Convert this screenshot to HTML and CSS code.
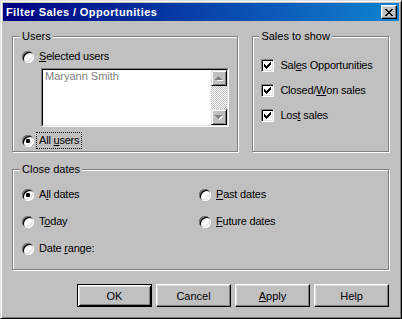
FILE: index.html
```html
<!DOCTYPE html>
<html lang="en">
<head>
  <meta charset="UTF-8">
  <title>Filter Sales / Opportunities</title>
  <link rel="stylesheet" href="styles.css">
</head>
<body>
  <div class="window">
    <!-- Title bar -->
    <div class="titlebar">
      <span class="title">Filter Sales / Opportunities</span>
      <span class="close-btn">
        <svg width="8" height="7" viewBox="0 0 8 7" shape-rendering="crispEdges"><path d="M0 0h2v1H0z M6 0h2v1H6z M1 1h2v1H1z M5 1h2v1H5z M2 2h4v1H2z M3 3h2v1H3z M2 4h4v1H2z M1 5h2v1H1z M5 5h2v1H5z M0 6h2v1H0z M6 6h2v1H6z" fill="#000"/></svg>
      </span>
    </div>

    <div class="dialog-body">
      <div class="top-row">
        <!-- Users -->
        <div class="group users">
          <div class="legend">Users</div>
          <div class="opt first"><span class="radio"></span><span><u>S</u>elected users</span></div>
          <div class="listbox">
            <div class="listbox-inner">
              <div class="list-items"><div class="list-item">Maryann Smith</div></div>
              <div class="scrollbar">
                <span class="scroll-btn">
                  <svg width="8" height="5" viewBox="0 0 8 5" shape-rendering="crispEdges"><path d="M4 1h1v1h1v1h1v1h1v1H2V4h1V3h1z" fill="#fff"/><path d="M3 0h1v1h1v1h1v1h1v1H0V3h1V2h1V1h1z" fill="#808080"/></svg>
                </span>
                <span class="scroll-track"></span>
                <span class="scroll-btn">
                  <svg width="8" height="5" viewBox="0 0 8 5" shape-rendering="crispEdges"><path d="M1 1h7v1H7v1H6v1H5v1H4V4H3V3H2V2H1z" fill="#fff"/><path d="M0 0h7v1H6v1H5v1H4v1H3V3H2V2H1V1H0z" fill="#808080"/></svg>
                </span>
              </div>
            </div>
          </div>
          <div class="opt last"><span class="radio checked"></span><span class="focus">All <u>u</u>sers</span></div>
        </div>

        <!-- Sales to show -->
        <div class="group sales">
          <div class="legend">Sales to show</div>
          <div class="checks">
            <div class="opt"><span class="checkbox"><svg width="7" height="7" viewBox="0 0 7 7" shape-rendering="crispEdges"><path d="M6 0h1v1H6z M5 1h2v1H5z M0 2h1v1H0z M4 2h3v1H4z M0 3h2v1H0z M3 3h3v1H3z M0 4h5v1H0z M1 5h3v1H1z M2 6h1v1H2z" fill="#000"/></svg></span><span>Sal<u>e</u>s Opportunities</span></div>
            <div class="opt"><span class="checkbox"><svg width="7" height="7" viewBox="0 0 7 7" shape-rendering="crispEdges"><path d="M6 0h1v1H6z M5 1h2v1H5z M0 2h1v1H0z M4 2h3v1H4z M0 3h2v1H0z M3 3h3v1H3z M0 4h5v1H0z M1 5h3v1H1z M2 6h1v1H2z" fill="#000"/></svg></span><span>Closed/<u>W</u>on sales</span></div>
            <div class="opt"><span class="checkbox"><svg width="7" height="7" viewBox="0 0 7 7" shape-rendering="crispEdges"><path d="M6 0h1v1H6z M5 1h2v1H5z M0 2h1v1H0z M4 2h3v1H4z M0 3h2v1H0z M3 3h3v1H3z M0 4h5v1H0z M1 5h3v1H1z M2 6h1v1H2z" fill="#000"/></svg></span><span>Los<u>t</u> sales</span></div>
          </div>
        </div>
      </div>

      <!-- Close dates -->
      <div class="group dates">
        <div class="legend">Close dates</div>
        <div class="date-grid">
          <div class="opt"><span class="radio checked"></span><span>A<u>l</u>l dates</span></div>
          <div class="opt"><span class="radio"></span><span><u>P</u>ast dates</span></div>
          <div class="opt"><span class="radio"></span><span>T<u>o</u>day</span></div>
          <div class="opt"><span class="radio"></span><span><u>F</u>uture dates</span></div>
          <div class="opt"><span class="radio"></span><span>Date <u>r</u>ange:</span></div>
        </div>
      </div>

      <!-- Buttons -->
      <div class="buttons">
        <button class="btn default">OK</button>
        <button class="btn">Cancel</button>
        <button class="btn"><u>A</u>pply</button>
        <button class="btn">Help</button>
      </div>
    </div>
  </div>
</body>
</html>
```

FILE: styles.css
```css
body {
  margin: 0;
  font-family: "Liberation Sans", Arial, sans-serif;
  font-size: 11px;
  line-height: 13px;
  color: #000;
  background: #c0c0c0;
}

.window {
  box-sizing: border-box;
  width: 402px;
  height: 319px;
  padding: 2px;
  background: #c0c0c0;
  border: 1px solid;
  border-color: #dfdfdf #000 #000 #dfdfdf;
  box-shadow: inset 1px 1px 0 #fff, inset -1px -1px 0 #808080;
}

/* Title bar */
.titlebar {
  height: 18px;
  display: flex;
  align-items: center;
  justify-content: space-between;
  padding: 0 2px 0 3px;
  background: linear-gradient(to right, #000080, #1084d0);
}

.title {
  color: #fff;
  font-weight: bold;
  letter-spacing: 0.4px;
}

.close-btn {
  box-sizing: border-box;
  width: 16px;
  height: 14px;
  display: flex;
  align-items: center;
  justify-content: center;
  background: #c0c0c0;
  border: 1px solid;
  border-color: #fff #000 #000 #fff;
  box-shadow: inset -1px -1px 0 #808080, inset 1px 1px 0 #dfdfdf;
}

.dialog-body {
  padding: 15px 10px 0 9px;
}

.top-row {
  display: flex;
  gap: 14px;
}

/* Group boxes */
.group {
  box-sizing: border-box;
  border: 1px solid #808080;
  box-shadow: 1px 1px 0 #fff, inset 1px 1px 0 #fff;
  padding-left: 9px;
}

.legend {
  display: table;
  margin: -7px 0 0 -2px;
  padding: 0 2px;
  background: #c0c0c0;
}

.users {
  width: 227px;
  height: 116px;
}

.sales {
  width: 137px;
  height: 116px;
  padding-left: 8px;
}

.dates {
  height: 101px;
  margin-top: 17px;
}

/* Options */
.opt {
  display: flex;
  align-items: center;
  gap: 5px;
  height: 13px;
  letter-spacing: -0.2px;
}

.users .first {
  margin-top: 7px;
}

.users .last {
  margin-top: 7px;
}

.focus {
  outline: 1px dotted #000;
  outline-offset: 1px;
  padding: 0 1px;
  margin-left: -1px;
}

.radio {
  flex: none;
  width: 12px;
  height: 12px;
  border-radius: 50%;
  background: #fff;
  display: flex;
  align-items: center;
  justify-content: center;
  box-shadow: inset 1px 1px 0 #808080, inset -1px -1px 0 #fff,
    inset 2px 2px 0 #000, inset -2px -2px 0 #dfdfdf;
}

.radio.checked::after {
  content: "";
  width: 4px;
  height: 4px;
  border-radius: 1px;
  background: #000;
}

.checks {
  display: flex;
  flex-direction: column;
  gap: 12px;
  margin-top: 16px;
}

.checks .opt {
  gap: 6px;
}

.checkbox {
  flex: none;
  box-sizing: border-box;
  width: 13px;
  height: 13px;
  display: flex;
  align-items: center;
  justify-content: center;
  background: #fff;
  border: 1px solid;
  border-color: #808080 #fff #fff #808080;
  box-shadow: inset 1px 1px 0 #000, inset -1px -1px 0 #dfdfdf;
}

/* List box */
.listbox {
  box-sizing: border-box;
  width: 188px;
  height: 59px;
  margin: 5px 0 0 19px;
  border: 1px solid;
  border-color: #808080 #fff #fff #808080;
}

.listbox-inner {
  height: 100%;
  display: flex;
  border: 1px solid;
  border-color: #000 #dfdfdf #dfdfdf #000;
  box-sizing: border-box;
  background: #fff;
}

.list-items {
  flex: 1;
}

.list-item {
  padding: 0 2px;
  color: #808080;
}

.scrollbar {
  width: 16px;
  display: flex;
  flex-direction: column;
}

.scroll-btn {
  box-sizing: border-box;
  height: 16px;
  display: flex;
  align-items: center;
  justify-content: center;
  background: #c0c0c0;
  border: 1px solid;
  border-color: #dfdfdf #000 #000 #dfdfdf;
  box-shadow: inset 1px 1px 0 #fff, inset -1px -1px 0 #808080;
}

.scroll-track {
  flex: 1;
  background: repeating-conic-gradient(#c0c0c0 0 25%, #fff 0 50%) 0 0 / 2px 2px;
}

/* Close dates */
.date-grid {
  display: grid;
  grid-template-columns: 177px auto;
  row-gap: 14px;
  margin-top: 12px;
}

/* Buttons */
.buttons {
  display: flex;
  justify-content: flex-end;
  gap: 4px;
  margin-top: 14px;
}

.btn {
  box-sizing: border-box;
  width: 75px;
  height: 23px;
  padding: 0;
  font-family: inherit;
  font-size: 11px;
  color: #000;
  background: #c0c0c0;
  border: 1px solid;
  border-color: #fff #000 #000 #fff;
  box-shadow: inset -1px -1px 0 #808080, inset 1px 1px 0 #dfdfdf;
}

.btn.default {
  border-color: #000;
  box-shadow: inset 1px 1px 0 #fff, inset -1px -1px 0 #000,
    inset 2px 2px 0 #dfdfdf, inset -2px -2px 0 #808080;
}
```
